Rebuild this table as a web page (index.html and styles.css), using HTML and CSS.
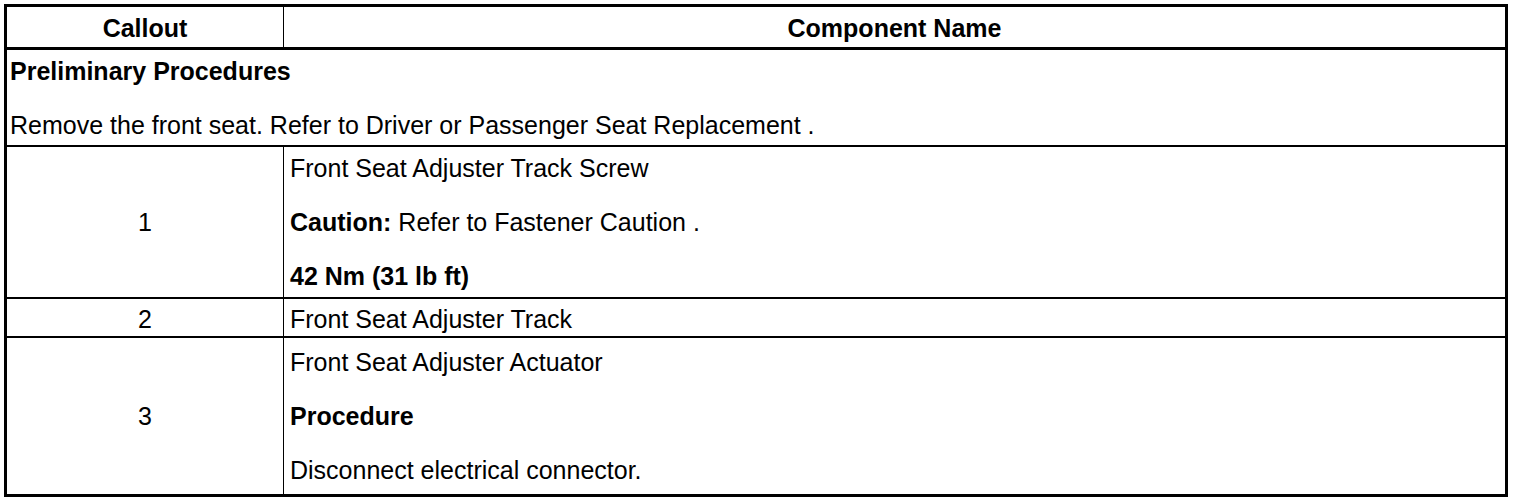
FILE: index.html
```html
<!DOCTYPE html>
<html>
<head>
<meta charset="utf-8">
<link rel="stylesheet" href="styles.css">
</head>
<body>
<table class="parts">
  <thead>
    <tr>
      <th class="col-callout">Callout</th>
      <th class="col-name">Component Name</th>
    </tr>
  </thead>
  <tbody>
    <tr class="prelim">
      <td colspan="2" class="cell-text">
        <p class="b">Preliminary Procedures</p>
        <p>Remove the front seat. Refer to Driver or Passenger Seat Replacement .</p>
      </td>
    </tr>
    <tr class="row-1">
      <td class="num">1</td>
      <td class="cell-text">
        <p>Front Seat Adjuster Track Screw</p>
        <p><span class="b">Caution:</span> Refer to Fastener Caution .</p>
        <p class="b">42 Nm (31 lb ft)</p>
      </td>
    </tr>
    <tr class="single">
      <td class="num">2</td>
      <td class="cell-text">Front Seat Adjuster Track</td>
    </tr>
    <tr class="row-3">
      <td class="num">3</td>
      <td class="cell-text">
        <p>Front Seat Adjuster Actuator</p>
        <p class="b">Procedure</p>
        <p>Disconnect electrical connector.</p>
      </td>
    </tr>
  </tbody>
</table>
</body>
</html>
```

FILE: styles.css
```css
html, body {
  margin: 0;
  padding: 0;
  background: #fff;
}
body {
  padding: 4px;
  font-family: "Liberation Sans", Arial, Helvetica, sans-serif;
  font-size: 25px;
  color: #000;
}
.parts {
  width: 1504px;
  border-collapse: collapse;
  border: 3px solid #000;
}
.parts th,
.parts td {
  border: 1px solid #000;
  border-top-width: 2px;
  padding: 6px 6px;
  vertical-align: middle;
}
.parts th {
  font-weight: bold;
  text-align: center;
  padding: 7px 6px 4px;
  border-bottom: 3px solid #000;
  border-top: 3px solid #000;
}
.col-callout {
  width: 264px;
}
.num {
  text-align: center;
}
.cell-text {
  text-align: left;
}
.prelim .cell-text {
  padding: 7px 6px 5px 3px;
}
.cell-text p {
  margin: 0 0 25px;
}
.cell-text p:last-child {
  margin-bottom: 0;
}
.row-1 td {
  padding-top: 7px;
  padding-bottom: 6px;
}
.single td {
  padding-top: 6px;
  padding-bottom: 2px;
}
.row-3 td {
  padding-top: 10px;
  padding-bottom: 9px;
}
.b {
  font-weight: bold;
}
```
